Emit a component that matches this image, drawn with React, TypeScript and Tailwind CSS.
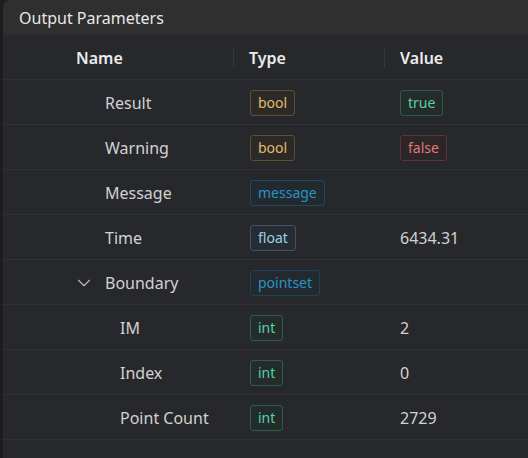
import { ChevronDown } from "lucide-react";

type Tone = "bool" | "true" | "false" | "message" | "float" | "pointset" | "int";

const tones: Record<Tone, string> = {
  bool: "text-[#e2b96b] border-[#5e4f35] bg-[#2c2a26]",
  true: "text-[#56d2a4] border-[#2e5a4c] bg-[#242c2b]",
  false: "text-[#e07a7c] border-[#5c3537] bg-[#2c2628]",
  message: "text-[#2a93c4] border-[#1e4a60] bg-[#222a30]",
  float: "text-[#9ccff0] border-[#3d5566] bg-[#262c31]",
  pointset: "text-[#2a93c4] border-[#1c4356] bg-[#222a30]",
  int: "text-[#52d4a2] border-[#2c5e4f] bg-[#242c2b]",
};

type Row = {
  name: string;
  type: Tone;
  value?: string;
  valueTone?: Tone;
  depth?: number;
  expandable?: boolean;
};

const rows: Row[] = [
  { name: "Result", type: "bool", value: "true", valueTone: "true" },
  { name: "Warning", type: "bool", value: "false", valueTone: "false" },
  { name: "Message", type: "message" },
  { name: "Time", type: "float", value: "6434.31" },
  { name: "Boundary", type: "pointset", expandable: true },
  { name: "IM", type: "int", value: "2", depth: 1 },
  { name: "Index", type: "int", value: "0", depth: 1 },
  { name: "Point Count", type: "int", value: "2729", depth: 1 },
];

function Badge({ tone, children }: { tone: Tone; children: string }) {
  return (
    <span className={`inline-flex h-[26px] items-center rounded-[3px] border px-[7px] text-[14px] ${tones[tone]}`}>
      {children}
    </span>
  );
}

function HeaderCell({ label, divider }: { label: string; divider?: boolean }) {
  return (
    <div className="flex h-full items-center">
      {divider && <div className="h-[21px] w-px bg-[#37383b]" />}
      <span className={divider ? "ml-[15px]" : "ml-[73px]"}>{label}</span>
    </div>
  );
}

export default function App() {
  return (
    <div
      className="h-[458px] w-[528px] overflow-hidden bg-[#1d1d1f] pl-[3px]"
      style={{ fontFamily: '"Segoe UI", "Noto Sans", "Open Sans", sans-serif' }}
    >
      <div className="h-full overflow-hidden rounded-tl-[8px] bg-[#27282c]">
        <div className="flex h-[35px] items-center bg-[#2f2f2f] pl-[16px] text-[16px] text-[#e8e8e8]">
          Output Parameters
        </div>
        <div className="grid h-[45px] grid-cols-[230px_151px_1fr] border-b border-[#303135] pt-px text-[16px] font-semibold text-[#ececec]">
          <HeaderCell label="Name" />
          <HeaderCell label="Type" divider />
          <HeaderCell label="Value" divider />
        </div>
        {rows.map((row) => (
          <div
            key={row.name}
            className="grid h-[45px] grid-cols-[230px_151px_1fr] border-b border-[#303135] pt-px text-[16px] text-[#d2d2d2]"
          >
            <div className={`flex items-center ${row.depth ? "pl-[117px]" : row.expandable ? "pl-[70px]" : "pl-[102px]"}`}>
              {row.expandable && (
                <ChevronDown size={22} strokeWidth={1.2} className="mr-[10px] text-[#bdbdbd]" />
              )}
              {row.name}
            </div>
            <div className="flex items-center pl-[17px]">
              <Badge tone={row.type}>{row.type}</Badge>
            </div>
            <div className="flex items-center pl-[16px]">
              {row.value &&
                (row.valueTone ? <Badge tone={row.valueTone}>{row.value}</Badge> : <span>{row.value}</span>)}
            </div>
          </div>
        ))}
      </div>
    </div>
  );
}
